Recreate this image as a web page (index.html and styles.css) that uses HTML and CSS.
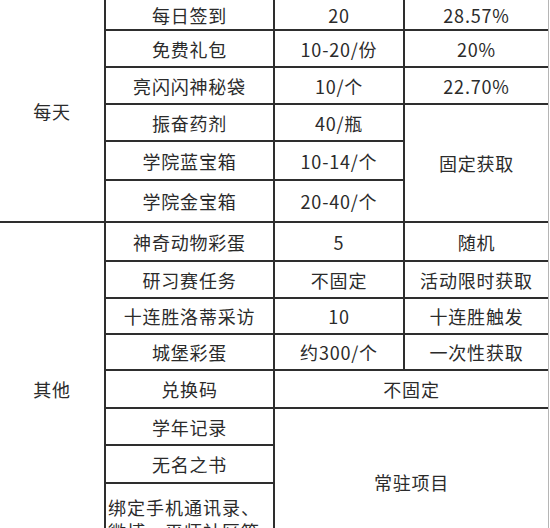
FILE: index.html
```html
<!DOCTYPE html>
<html lang="zh-CN">
<head>
<meta charset="utf-8">
<title>获取途径</title>
<link rel="stylesheet" href="styles.css">
</head>
<body>
<div class="table">
  <div class="cell group g1">每天</div>
  <div class="cell">每日签到</div>
  <div class="cell">20</div>
  <div class="cell">28.57%</div>

  <div class="cell">免费礼包</div>
  <div class="cell">10-20/份</div>
  <div class="cell">20%</div>

  <div class="cell">亮闪闪神秘袋</div>
  <div class="cell">10/个</div>
  <div class="cell">22.70%</div>

  <div class="cell">振奋药剂</div>
  <div class="cell">40/瓶</div>
  <div class="cell fixed">固定获取</div>

  <div class="cell">学院蓝宝箱</div>
  <div class="cell">10-14/个</div>

  <div class="cell">学院金宝箱</div>
  <div class="cell">20-40/个</div>

  <div class="cell group g2">其他</div>
  <div class="cell">神奇动物彩蛋</div>
  <div class="cell">5</div>
  <div class="cell">随机</div>

  <div class="cell">研习赛任务</div>
  <div class="cell">不固定</div>
  <div class="cell">活动限时获取</div>

  <div class="cell">十连胜洛蒂采访</div>
  <div class="cell">10</div>
  <div class="cell">十连胜触发</div>

  <div class="cell">城堡彩蛋</div>
  <div class="cell">约300/个</div>
  <div class="cell">一次性获取</div>

  <div class="cell">兑换码</div>
  <div class="cell span2">不固定</div>

  <div class="cell">学年记录</div>
  <div class="cell perm">常驻项目</div>

  <div class="cell">无名之书</div>

  <div class="cell wrap">绑定手机通讯录、微博、平师社区等</div>
</div>
</body>
</html>
```

FILE: styles.css
```css
html, body {
  margin: 0;
  padding: 0;
  background: #ffffff;
  overflow: hidden;
}

.table {
  width: 548px;
  display: grid;
  grid-template-columns: 104px 167px 128px 143px;
  grid-template-rows: 29px 35px 35px 35px 37px 40px 37px 35px 34px 34px 36px 35px 36px 70px;
  gap: 2px;
  background: #2e2e2e;
  border-right: 1px solid #b5b5b5;
  font-family: "Noto Sans CJK SC", "Noto Sans", sans-serif;
  font-size: 18px;
  letter-spacing: 0.8px;
  color: #2b2b2b;
}

.cell {
  background: #ffffff;
  display: flex;
  align-items: center;
  justify-content: center;
  white-space: nowrap;
}

.group.g1 {
  grid-column: 1;
  grid-row: 1 / span 6;
}

.group.g2 {
  grid-column: 1;
  grid-row: 7 / span 8;
}

.fixed {
  grid-column: 4;
  grid-row: 4 / span 3;
}

.span2 {
  grid-column: 3 / span 2;
}

.perm {
  grid-column: 3 / span 2;
  grid-row: 12 / span 3;
}

.wrap {
  white-space: normal;
  align-items: flex-start;
  justify-content: flex-start;
  padding: 11px 0 0 2px;
  line-height: 24px;
  letter-spacing: 1px;
}
```
